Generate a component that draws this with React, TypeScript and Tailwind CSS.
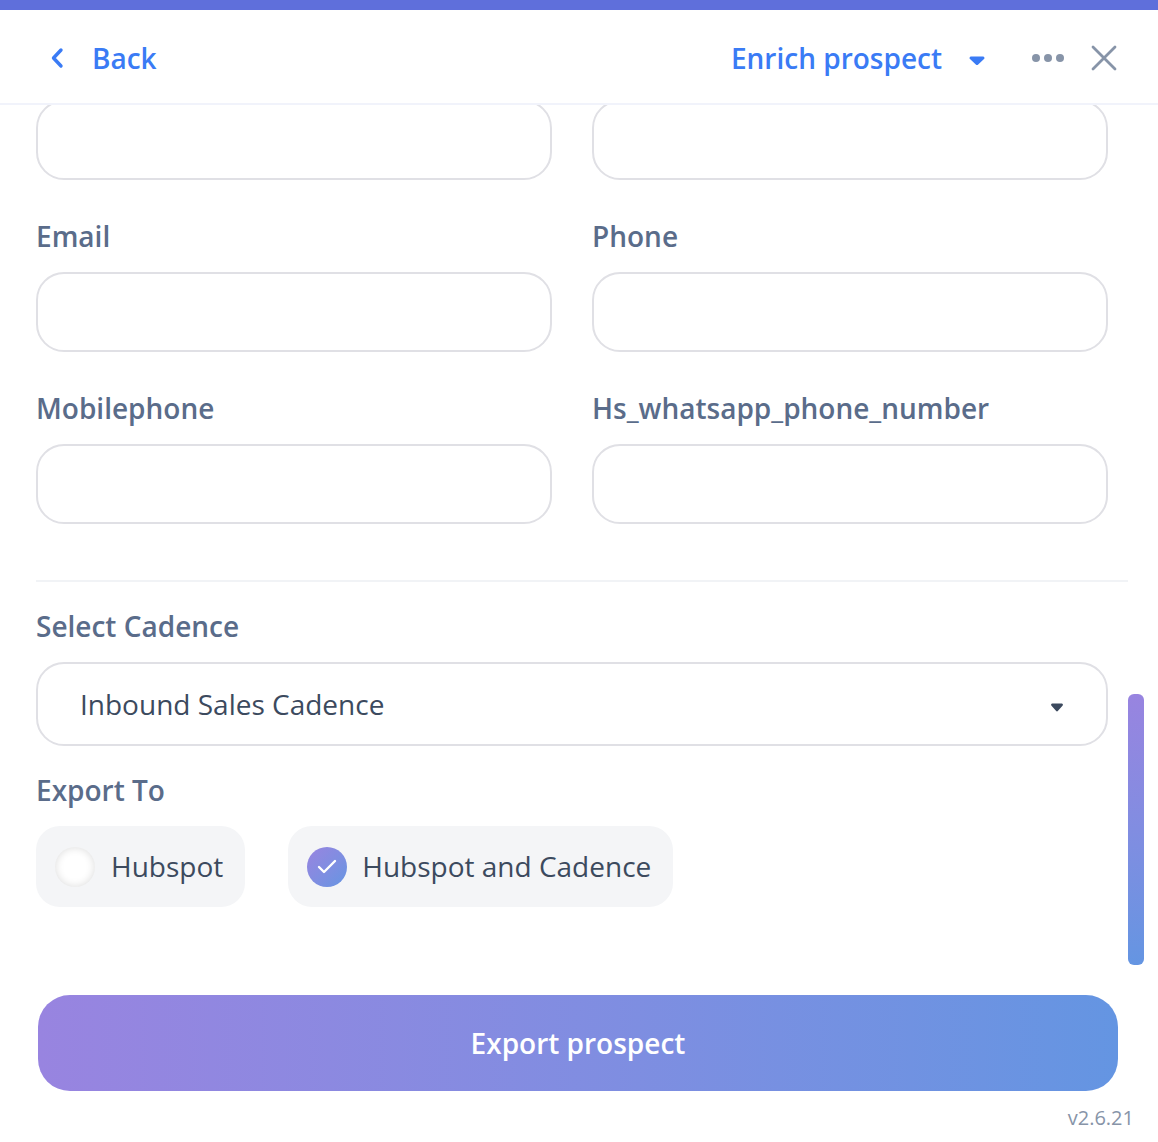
const FONT = "font-['Open_Sans','Noto_Sans',sans-serif]";

function Field({ label }: { label: string }) {
  return (
    <div className="flex flex-col">
      <label className="h-[38px] mb-[16px] -mt-[1px] pb-[1px] flex items-center text-[28px] font-semibold leading-[38px] text-[#5a6c8a]">
        {label}
      </label>
      <div className="h-[80px] mt-[1px] rounded-[28px] border-2 border-[#e0e0e5] bg-white" />
    </div>
  );
}

function Radio({ label, checked }: { label: string; checked?: boolean }) {
  return (
    <div className="h-[81px] flex items-center gap-[16px] pl-[19px] pr-[22px] rounded-[24px] bg-[#f4f5f7]">
      {checked ? (
        <span className="w-[40px] h-[40px] -mr-[1px] rounded-full flex items-center justify-center bg-gradient-to-br from-[#9884e0] to-[#6495e2]">
          <svg className="-mt-[2px]" width="22" height="16" viewBox="0 0 22 16" fill="none">
            <path d="M3 9l5 5L19 3" stroke="#fff" strokeWidth="2.4" strokeLinecap="round" strokeLinejoin="round" />
          </svg>
        </span>
      ) : (
        <span className="w-[40px] h-[40px] rounded-full bg-white shadow-[inset_0_0_8px_rgba(0,0,0,0.14)]" />
      )}
      <span className="text-[28px] leading-[38px] text-[#3c4a5e] pb-[2px]">{label}</span>
    </div>
  );
}

export default function App() {
  return (
    <div className={`${FONT} relative w-[1158px] h-[1142px] overflow-hidden bg-white`}>
      <div className="h-[10px] bg-[#5f6fdb]" />

      {/* Header */}
      <header className="h-[95px] flex items-center justify-between border-b-2 border-[#f1f3fb] pl-[50px] pr-[40px] pt-[2px] text-[#3a7bf5]">
        <div className="flex items-center gap-[28px]">
          <svg width="14" height="22" viewBox="0 0 14 22" fill="none">
            <path d="M11 3L3.5 11l7.5 8" stroke="#3a7bf5" strokeWidth="3.4" strokeLinecap="round" strokeLinejoin="round" />
          </svg>
          <span className="text-[28px] font-semibold leading-[38px]">Back</span>
        </div>
        <div className="flex items-center">
          <span className="text-[28px] font-semibold leading-[38px]">Enrich prospect</span>
          <svg className="ml-[27px] mt-[6px]" width="16" height="10" viewBox="0 0 16 10">
            <path d="M2 0.500h12a1.500 1.500 0 0 1 1 2.600L9.200 8.500a1.800 1.800 0 0 1-2.400 0L1 3.100A1.500 1.500 0 0 1 2 0.500z" fill="#3a7bf5" />
          </svg>
          <svg className="ml-[46px]" width="34" height="10" viewBox="0 0 34 10">
            <circle cx="5" cy="5" r="4" fill="#8794a8" />
            <circle cx="17" cy="5" r="4" fill="#8794a8" />
            <circle cx="29" cy="5" r="4" fill="#8794a8" />
          </svg>
          <svg className="ml-[25px]" width="28" height="28" viewBox="0 0 28 28" fill="none">
            <path d="M3 3l22 22M25 3L3 25" stroke="#8794a8" strokeWidth="2.800" strokeLinecap="round" />
          </svg>
        </div>
      </header>

      {/* Scrolled form */}
      <main className="h-[1037px] overflow-hidden pl-[36px] pr-[30px]">
        <div className="-mt-[5px] w-[1072px] grid grid-cols-[516px_516px] gap-x-[40px] gap-y-[38px]">
          <div className="h-[80px] rounded-[28px] border-2 border-[#e0e0e5] bg-white" />
          <div className="h-[80px] rounded-[28px] border-2 border-[#e0e0e5] bg-white" />
          <Field label="Email" />
          <Field label="Phone" />
          <Field label="Mobilephone" />
          <Field label="Hs_whatsapp_phone_number" />
        </div>

        <div className="mt-[56px] h-[2px] w-[1092px] bg-[#f1f3f6]" />

        <div className="mt-[25px] h-[38px] flex items-center text-[28px] font-semibold text-[#5a6c8a]">
          Select Cadence
        </div>
        <div className="mt-[17px] w-[1072px] h-[84px] flex items-center justify-between pl-[42px] pr-[43px] rounded-[28px] border-2 border-[#e0e0e5]">
          <span className="text-[28px] leading-[38px] text-[#3c4a5e]">Inbound Sales Cadence</span>
          <svg className="mt-[6px]" width="12" height="9" viewBox="0 0 14 9" preserveAspectRatio="none">
            <path d="M1.500 0.500h11a1.300 1.300 0 0 1 .9 2.300L8.200 7.800a1.700 1.700 0 0 1-2.400 0L.6 2.800A1.300 1.300 0 0 1 1.500 0.500z" fill="#3c4a5e" />
          </svg>
        </div>

        <div className="mt-[25px] h-[38px] flex items-center text-[28px] font-semibold text-[#5a6c8a]">
          Export To
        </div>
        <div className="mt-[17px] flex gap-[43px]">
          <Radio label="Hubspot" />
          <Radio label="Hubspot and Cadence" checked />
        </div>

        <button className="mt-[88px] ml-[2px] w-[1080px] h-[96px] rounded-[32px] bg-gradient-to-r from-[#9884e0] to-[#6495e2] text-[28px] font-semibold text-white">
          Export prospect
        </button>

        <div className="mt-[10px] w-[1098px] text-right text-[20px] leading-[34px] text-[#8794a8]">v2.6.21</div>
      </main>

      {/* Scrollbar thumb */}
      <div className="absolute left-[1128px] top-[694px] w-[16px] h-[271px] rounded-[6px] bg-gradient-to-b from-[#9884e0] to-[#6495e2]" />
    </div>
  );
}
